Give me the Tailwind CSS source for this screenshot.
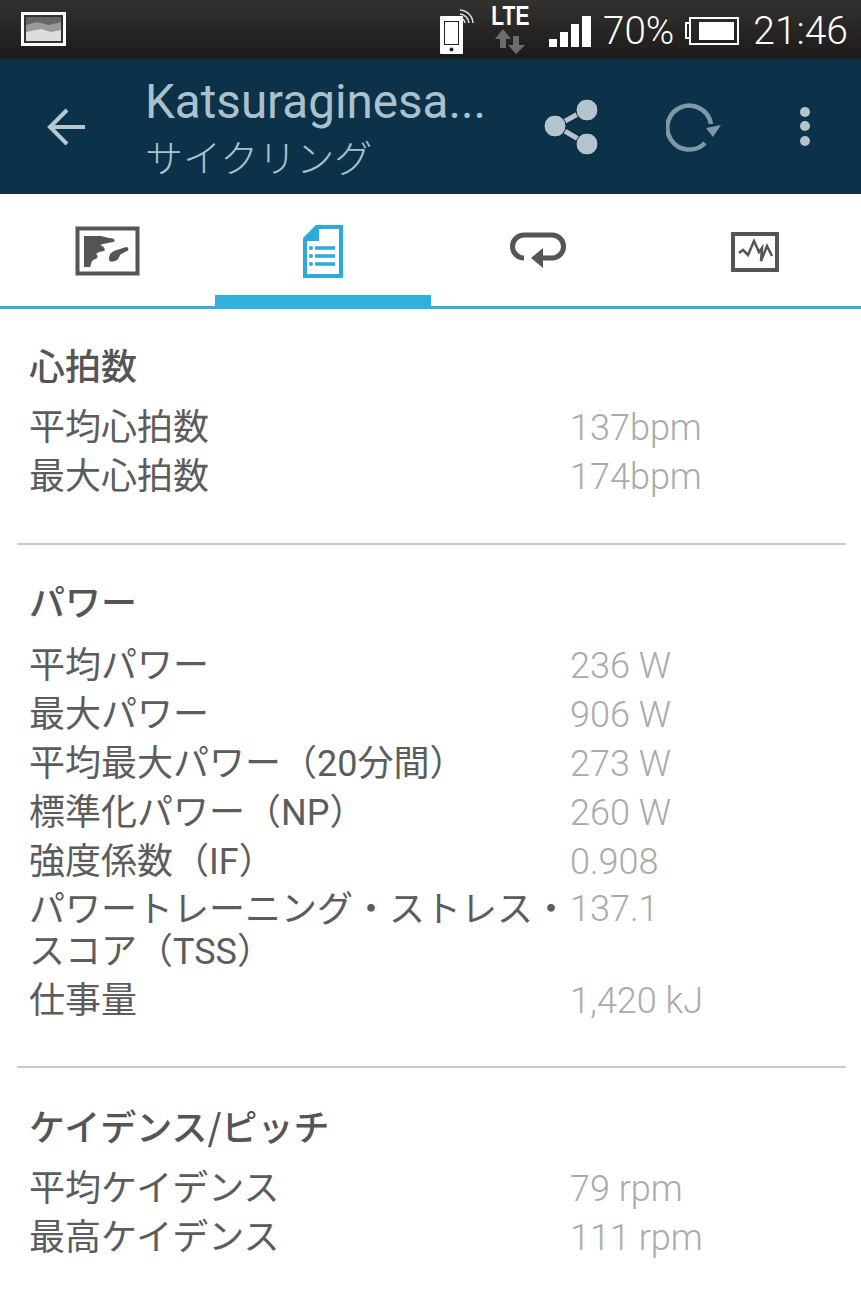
<!DOCTYPE html>
<html lang="ja">
<head>
  <meta charset="UTF-8">
  <title>サイクリング</title>
  <script src="https://cdn.jsdelivr.net/npm/@tailwindcss/browser@4"></script>
</head>
<body class="bg-white font-['Roboto','Noto_Sans_CJK_JP',sans-serif] w-[861px] h-[1296px] overflow-hidden">

  <!-- status bar -->
  <div class="h-[58px] bg-gradient-to-b from-[#333230] to-[#1c1b1a] flex items-center justify-between pl-[21px] pr-[13px]">
    <svg width="45" height="34" viewBox="0 0 45 34">
      <rect x="1.500" y="1.500" width="42" height="31" fill="#333" stroke="#fff" stroke-width="3"/>
      <rect x="5" y="5" width="35" height="24" fill="#666"/>
      <path d="M5 13 L16 10 L28 13 L40 10 V29 H5Z" fill="#999"/>
      <path d="M5 20 L20 17 L30 20 L40 18 V29 H5Z" fill="#ddd"/>
    </svg>
    <div class="flex items-center text-white text-[39px] font-light leading-none pt-[4px]">
      <svg width="40" height="52" viewBox="0 0 40 52" class="mr-[11px] mt-[-4px]">
        <rect x="1" y="13" width="23" height="38" rx="1" fill="#fff"/>
        <rect x="5" y="18" width="15" height="24" fill="#222"/>
        <rect x="6" y="19" width="13" height="22" fill="#fff"/>
        <circle cx="12.500" cy="46.500" r="2" fill="#222"/>
        <path d="M21 7 A14 14 0 0 1 34 20 M21 11 A10 10 0 0 1 30 20 M21 15 A6 6 0 0 1 26 20" fill="none" stroke="#ddd" stroke-width="1.500"/>
      </svg>
      <div class="flex flex-col items-center w-[40px] mr-[19px] mt-[-4px]">
        <span class="text-[28px] font-bold leading-[24px] font-['Liberation_Sans'] scale-x-75">LTE</span>
        <svg width="36" height="26" viewBox="0 0 36 26">
          <path d="M11 1 L19 11 H14 V20 H8 V11 H3Z" fill="#6d6d6d"/>
          <path d="M21 8 H27 V17 H33 L24 26 L16 17 H21Z" fill="#6d6d6d"/>
        </svg>
      </div>
      <svg width="43" height="31" viewBox="0 0 43 31" class="mr-[11px]">
        <rect x="0" y="23" width="8" height="8" fill="#fff"/>
        <rect x="11" y="16" width="8" height="15" fill="#fff"/>
        <rect x="22" y="8" width="8" height="23" fill="#fff"/>
        <rect x="33" y="0" width="9" height="31" fill="#fff"/>
      </svg>
      <span class="mr-[10px] text-[38.500px]">70%</span>
      <svg width="56" height="30" viewBox="0 0 56 30" class="mr-[13px]">
        <path d="M6 7 H2 V22 H6 M6 2 H54 V28 H6Z" fill="none" stroke="#fff" stroke-width="2"/>
        <rect x="15" y="6" width="35" height="18" fill="#fff"/>
      </svg>
      <span>21:46</span>
    </div>
  </div>

  <!-- action bar -->
  <div class="h-[136px] bg-[#0b3249] border-t-2 border-[#14262f] flex items-center relative">
    <svg width="40" height="40" viewBox="0 0 40 40" class="ml-[47px] mr-[58px] shrink-0">
      <path d="M38 20 H3 M20 3 L3 20 L20 37" fill="none" stroke="#b4c9d3" stroke-width="4"/>
    </svg>
    <div class="w-[345px] text-[#abc2cd]">
      <div class="text-[47.600px] leading-[52px]">Katsuraginesa...</div>
      <div class="text-[38px] leading-[50px] pt-[3px] -mb-[3px] font-['Noto_Sans_CJK_JP'] font-light">サイクリング</div>
    </div>
    <svg width="58" height="60" viewBox="0 0 58 60" class="ml-[53px]">
      <path d="M44 12 L13 29 L44 47" fill="none" stroke="#0a2233" stroke-width="7"/>
      <path d="M44 12 L13 29 L44 47" fill="none" stroke="#b4c4ce" stroke-width="5"/>
      <circle cx="44" cy="13" r="11" fill="#b4c4ce" stroke="#0a2233" stroke-width="1"/>
      <circle cx="12" cy="29" r="11" fill="#b4c4ce" stroke="#0a2233" stroke-width="1"/>
      <circle cx="44" cy="47" r="11" fill="#b4c4ce" stroke="#0a2233" stroke-width="1"/>
    </svg>
    <svg width="56" height="54" viewBox="0 0 56 54" class="ml-[65px]">
      <path d="M39 43 A22 22 0 1 1 45 24" fill="none" stroke="#7e98a6" stroke-width="4.500"/>
      <path d="M40 28 L55 25 L47 37Z" fill="#7e98a6"/>
    </svg>
    <svg width="12" height="42" viewBox="0 0 12 42" class="ml-[77px]">
      <circle cx="6" cy="6" r="5" fill="#b4c4ce"/>
      <circle cx="6" cy="20" r="5" fill="#b4c4ce"/>
      <circle cx="6" cy="35" r="5" fill="#b4c4ce"/>
    </svg>
  </div>

  <!-- tabs -->
  <div class="h-[115px] border-b-[3px] border-[#33b1dc] grid grid-cols-4">
    <div class="flex justify-center pt-[32px]">
      <svg width="66" height="50" viewBox="0 0 66 50">
        <rect x="2.500" y="2.500" width="60" height="45" fill="none" stroke="#555" stroke-width="4"/>
        <path d="M9 10 H26 L34 12 C40 12 41 15 38 16 L28 18 L25 19 C29 20 31 24 29 25 L24 26 L21 28 C24 30 22 33 20 33 L17 35 L15 41 H9Z" fill="#555"/>
        <path d="M34 33 C34 27 38 25 42 24 L51 21 C54 21 54 24 52 25 L46 28 C44 30 44 34 40 35 C36 36 34 36 34 33Z" fill="#555"/>
      </svg>
    </div>
    <div class="flex justify-center pt-[31px] relative">
      <svg width="40" height="53" viewBox="0 0 40 53">
        <path d="M14 2 H38 V51 H2 V14 Z" fill="none" stroke="#2ca9dd" stroke-width="4"/>
        <path d="M14 2 V14 H2Z" fill="#2ca9dd" stroke="#2ca9dd" stroke-width="4"/>
        <path d="M12 23 H32 M12 31 H32 M12 39 H32" stroke="#2ca9dd" stroke-width="3.500"/>
        <circle cx="8" cy="23" r="2" fill="#2ca9dd"/>
        <circle cx="8" cy="31" r="2" fill="#2ca9dd"/>
        <circle cx="8" cy="39" r="2" fill="#2ca9dd"/>
      </svg>
      <div class="absolute left-0 right-0 bottom-0 h-[11px] bg-[#2fb1dd]"></div>
    </div>
    <div class="flex justify-center pt-[38px]">
      <svg width="56" height="38" viewBox="0 0 56 38">
        <path d="M14 26 H14 A11.500 11.500 0 0 1 14 3 H42 A11.500 11.500 0 0 1 42 26 H28" fill="none" stroke="#555" stroke-width="5"/>
        <path d="M33 16 V36 L21 26Z" fill="#555"/>
      </svg>
    </div>
    <div class="flex justify-center pt-[38px] pl-[4px]">
      <svg width="48" height="40" viewBox="0 0 48 40">
        <rect x="2" y="2" width="44" height="36" fill="none" stroke="#555" stroke-width="4"/>
        <path d="M8 21 L12 18 L17 23 L23 9 L28 20 L31 16 L30 29 L36 14 L41 24" fill="none" stroke="#555" stroke-width="2.500"/>
      </svg>
    </div>
  </div>

  <div class="pl-[17px] pr-[15px]">
    <!-- heart rate -->
    <section class="h-[236px] border-b-2 border-[#c9c9c9] pl-[12px] pt-[30px]">
      <h2 class="text-[36px] leading-[50px] font-medium text-[#555] font-['Noto_Sans_CJK_JP']">心拍数</h2>
      <dl class="mt-[15px] text-[36px] leading-[49px]">
        <div class="flex"><dt class="w-[541px] text-[#5c5c5c]">平均心拍数</dt><dd class="text-[#aaa] font-light">137bpm</dd></div>
        <div class="flex"><dt class="w-[541px] text-[#5c5c5c]">最大心拍数</dt><dd class="text-[#aaa] font-light">174bpm</dd></div>
      </dl>
    </section>

    <!-- power -->
    <section class="h-[523px] border-b-2 border-[#c9c9c9] pl-[12px] pt-[30px]">
      <h2 class="text-[36px] leading-[50px] font-medium text-[#555] font-['Noto_Sans_CJK_JP']">パワー</h2>
      <dl class="mt-[17px] text-[36px] leading-[49px]">
        <div class="flex"><dt class="w-[541px] text-[#5c5c5c]">平均パワー</dt><dd class="text-[#aaa] font-light">236 W</dd></div>
        <div class="flex"><dt class="w-[541px] text-[#5c5c5c]">最大パワー</dt><dd class="text-[#aaa] font-light">906 W</dd></div>
        <div class="flex"><dt class="w-[541px] text-[#5c5c5c]">平均最大パワー（20分間）</dt><dd class="text-[#aaa] font-light">273 W</dd></div>
        <div class="flex"><dt class="w-[541px] text-[#5c5c5c]">標準化パワー（NP）</dt><dd class="text-[#aaa] font-light">260 W</dd></div>
        <div class="flex"><dt class="w-[541px] text-[#5c5c5c]">強度係数（IF）</dt><dd class="text-[#aaa] font-light">0.908</dd></div>
        <div class="flex pb-[4px]"><dt class="w-[541px] text-[#5c5c5c] leading-[42px] pt-[2px]">パワートレーニング・ストレス・スコア（TSS）</dt><dd class="text-[#aaa] font-light leading-[42px] pt-[1px]">137.1</dd></div>
        <div class="flex"><dt class="w-[541px] text-[#5c5c5c]">仕事量</dt><dd class="text-[#aaa] font-light">1,420 kJ</dd></div>
      </dl>
    </section>

    <!-- cadence -->
    <section class="pl-[12px] pt-[32px]">
      <h2 class="text-[36px] leading-[50px] font-medium text-[#555] font-['Noto_Sans_CJK_JP']">ケイデンス/ピッチ</h2>
      <dl class="mt-[15px] text-[36px] leading-[49px]">
        <div class="flex"><dt class="w-[541px] text-[#5c5c5c]">平均ケイデンス</dt><dd class="text-[#aaa] font-light">79 rpm</dd></div>
        <div class="flex"><dt class="w-[541px] text-[#5c5c5c]">最高ケイデンス</dt><dd class="text-[#aaa] font-light">111 rpm</dd></div>
      </dl>
    </section>
  </div>
</body>
</html>
